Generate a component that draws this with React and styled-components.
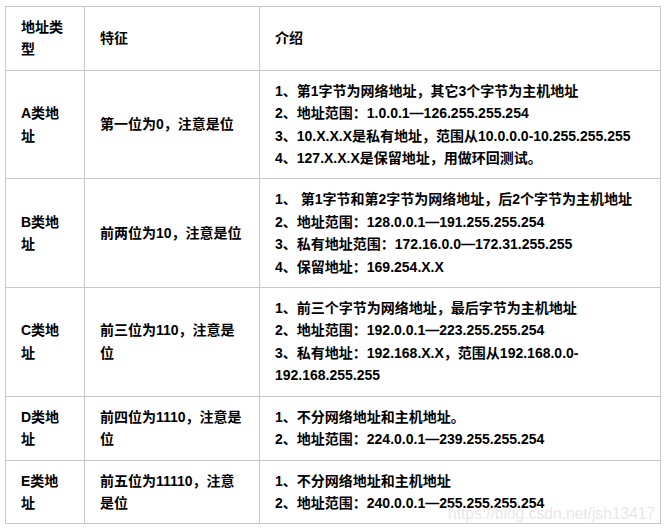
import React from "react";
import styled, { createGlobalStyle } from "styled-components";

const GlobalStyle = createGlobalStyle`
  html, body {
    margin: 0;
    padding: 0;
    background: #fff;
  }
  body {
    font-family: "Liberation Sans", "Noto Sans CJK SC", sans-serif;
    color: #000;
  }
`;

const rows = [
  {
    type: "A类地址",
    feature: "第一位为0，注意是位",
    intro: [
      "1、第1字节为网络地址，其它3个字节为主机地址",
      "2、地址范围：1.0.0.1—126.255.255.254",
      "3、10.X.X.X是私有地址，范围从10.0.0.0-10.255.255.255",
      "4、127.X.X.X是保留地址，用做环回测试。",
    ],
  },
  {
    type: "B类地址",
    feature: "前两位为10，注意是位",
    intro: [
      "1、 第1字节和第2字节为网络地址，后2个字节为主机地址",
      "2、地址范围：128.0.0.1—191.255.255.254",
      "3、私有地址范围：172.16.0.0—172.31.255.255",
      "4、保留地址：169.254.X.X",
    ],
  },
  {
    type: "C类地址",
    feature: "前三位为110，注意是位",
    intro: [
      "1、前三个字节为网络地址，最后字节为主机地址",
      "2、地址范围：192.0.0.1—223.255.255.254",
      "3、私有地址：192.168.X.X，范围从192.168.0.0-192.168.255.255",
    ],
  },
  {
    type: "D类地址",
    feature: "前四位为1110，注意是位",
    intro: ["1、不分网络地址和主机地址。", "2、地址范围：224.0.0.1—239.255.255.254"],
  },
  {
    type: "E类地址",
    feature: "前五位为11110，注意是位",
    intro: ["1、不分网络地址和主机地址", "2、地址范围：240.0.0.1—255.255.255.254"],
  },
];

export default function App() {
  return (
    <Page>
      <GlobalStyle />
      <Table>
        <colgroup>
          <col style={{ width: 79 }} />
          <col style={{ width: 175 }} />
          <col style={{ width: 401 }} />
        </colgroup>
        <thead>
          <tr>
            <Cell as="th">地址类型</Cell>
            <Cell as="th">特征</Cell>
            <Cell as="th">介绍</Cell>
          </tr>
        </thead>
        <tbody>
          {rows.map((r) => (
            <tr key={r.type}>
              <Cell>{r.type}</Cell>
              <Cell>{r.feature}</Cell>
              <Cell>
                {r.intro.map((line) => (
                  <Line key={line}>{line}</Line>
                ))}
              </Cell>
            </tr>
          ))}
        </tbody>
      </Table>
      <Watermark>https://blog.csdn.net/jsh13417</Watermark>
    </Page>
  );
}

const Page = styled.div`
  position: relative;
  width: 668px;
  height: 532px;
  padding: 6px 0 0 5px;
  box-sizing: border-box;
`;

const Table = styled.table`
  border-collapse: collapse;
  table-layout: fixed;
  width: 655px;
  font-size: 14px;
  font-weight: bold;
  line-height: 22.4px;
`;

const Cell = styled.td`
  border: 1px solid #c8c8c8;
  padding: 9px 15px;
  vertical-align: middle;
  text-align: left;
  font-weight: bold;
`;

const Line = styled.div`
  white-space: normal;
`;

const Watermark = styled.div`
  position: absolute;
  left: 448px;
  top: 505px;
  font-family: "Liberation Sans", sans-serif;
  font-size: 15.6px;
  color: rgba(220, 220, 220, 0.7);
  text-shadow: 0 0 1px rgba(255, 255, 255, 0.9);
  pointer-events: none;
`;
